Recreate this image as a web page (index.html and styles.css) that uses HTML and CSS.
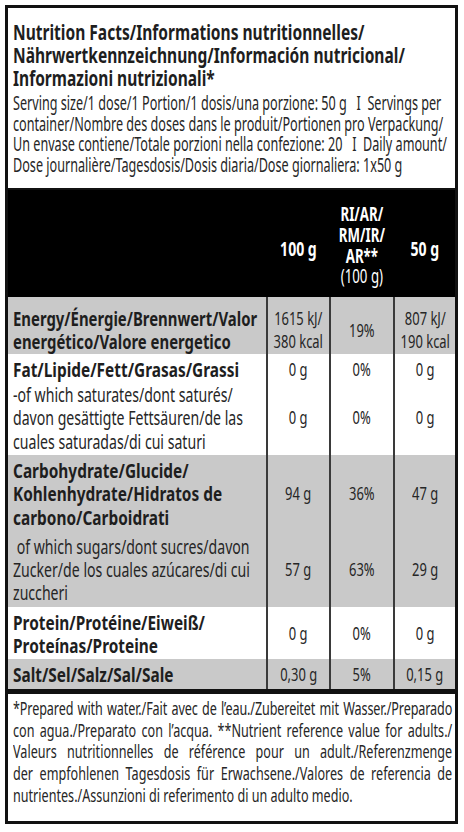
FILE: index.html
```html
<!DOCTYPE html>
<html lang="en">
<head>
<meta charset="utf-8">
<title>Nutrition Facts</title>
<link rel="stylesheet" href="styles.css">
</head>
<body>
<div class="label">
  <div class="head">
    <h1 class="title">Nutrition Facts/Informations nutritionnelles/<br>Nährwertkennzeichnung/Información nutricional/<br>Informazioni nutrizionali*</h1>
    <p class="serving">Serving size/1 dose/1 Portion/1 dosis/una porzione: 50 g&nbsp;&nbsp;&nbsp;I&nbsp;&nbsp;Servings per<br>container/Nombre des doses dans le produit/Portionen pro Verpackung/<br>Un envase contiene/Totale porzioni nella confezione: 20&nbsp;&nbsp;&nbsp;I&nbsp;&nbsp;Daily amount/<br>Dose journalière/Tagesdosis/Dosis diaria/Dose giornaliera: 1x50 g</p>
  </div>
  <table class="facts">
    <colgroup>
      <col class="c-name">
      <col class="c-100">
      <col class="c-ri">
      <col class="c-50">
    </colgroup>
    <thead>
      <tr>
        <th></th>
        <th class="h-col"><span class="v">100 g</span></th>
        <th class="h-ri"><span class="v">RI/AR/<br>RM/IR/<br>AR**<br><span class="sub">(100 g)</span></span></th>
        <th class="h-col"><span class="v">50 g</span></th>
      </tr>
    </thead>
    <tbody>
      <tr class="gray r-energy">
        <td class="name"><span class="t">Energy/Énergie/Brennwert/Valor<br>energético/Valore energetico</span></td>
        <td class="num"><span class="v">1615 kJ/<br>380 kcal</span></td>
        <td class="num"><span class="v">19%</span></td>
        <td class="num"><span class="v">807 kJ/<br>190 kcal</span></td>
      </tr>
      <tr class="r-fat">
        <td class="name"><span class="t">Fat/Lipide/Fett/Grasas/Grassi</span></td>
        <td class="num"><span class="v">0 g</span></td>
        <td class="num"><span class="v">0%</span></td>
        <td class="num"><span class="v">0 g</span></td>
      </tr>
      <tr class="r-sat">
        <td class="name sub-row"><span class="t">-of which saturates/dont saturés/<br>davon gesättigte Fettsäuren/de las<br>cuales saturadas/di cui saturi</span></td>
        <td class="num"><span class="v">0 g</span></td>
        <td class="num"><span class="v">0%</span></td>
        <td class="num"><span class="v">0 g</span></td>
      </tr>
      <tr class="gray">
        <td class="name"><span class="t">Carbohydrate/Glucide/<br>Kohlenhydrate/Hidratos de<br>carbono/Carboidrati</span></td>
        <td class="num"><span class="v">94 g</span></td>
        <td class="num"><span class="v">36%</span></td>
        <td class="num"><span class="v">47 g</span></td>
      </tr>
      <tr class="gray">
        <td class="name sub-row"><span class="t">&nbsp;of which sugars/dont sucres/davon<br>Zucker/de los cuales azúcares/di cui<br>zuccheri</span></td>
        <td class="num"><span class="v">57 g</span></td>
        <td class="num"><span class="v">63%</span></td>
        <td class="num"><span class="v">29 g</span></td>
      </tr>
      <tr>
        <td class="name"><span class="t">Protein/Protéine/Eiweiß/<br>Proteínas/Proteine</span></td>
        <td class="num"><span class="v">0 g</span></td>
        <td class="num"><span class="v">0%</span></td>
        <td class="num"><span class="v">0 g</span></td>
      </tr>
      <tr class="gray last">
        <td class="name"><span class="t">Salt/Sel/Salz/Sal/Sale</span></td>
        <td class="num"><span class="v">0,30 g</span></td>
        <td class="num"><span class="v">5%</span></td>
        <td class="num"><span class="v">0,15 g</span></td>
      </tr>
    </tbody>
  </table>
  <div class="note">
    <div class="note-text">
      <span class="ln tight">*Prepared with water./Fait avec de l’eau./Zubereitet mit Wasser./Preparado</span>
      <span class="ln">con agua./Preparato con l’acqua. **Nutrient reference value for adults./</span>
      <span class="ln">Valeurs nutritionnelles de référence pour un adult./Referenzmenge</span>
      <span class="ln">der empfohlenen Tagesdosis für Erwachsene./Valores de referencia de</span>
      <span class="ln end">nutrientes./Assunzioni di referimento di un adulto medio.</span>
    </div>
  </div>
</div>
</body>
</html>
```

FILE: styles.css
```css
html, body {
  margin: 0;
  padding: 0;
  background: #ffffff;
}

body {
  font-family: "Noto Sans", "Open Sans", "DejaVu Sans", sans-serif;
  color: #1e1e1e;
}

.label {
  margin: 5px 0 0 5px;
  width: 453px;
  box-sizing: border-box;
  border: 3px solid #111111;
  overflow: hidden;
}

/* ---------- heading block ---------- */
.head {
  padding: 13px 5px 12.5px;
  border-bottom: 2px solid #111111;
}

.title {
  margin: 0;
  width: max-content;
  white-space: nowrap;
  font-size: 21px;
  line-height: 22.75px;
  font-weight: 700;
  transform: scaleX(0.74);
  transform-origin: left top;
}

.serving {
  margin: 4px 0 0;
  width: max-content;
  white-space: nowrap;
  font-size: 19px;
  line-height: 20.6px;
  font-weight: 400;
  color: #262626;
  transform: scaleX(0.664);
  transform-origin: left top;
}

/* ---------- table ---------- */
.facts {
  width: 100%;
  border-collapse: collapse;
  table-layout: fixed;
}

.c-name { width: 259px; }
.c-100 { width: 63px; }
.c-ri { width: 64px; }
.c-50 { width: 61px; }

.facts thead tr {
  height: 107px;
}

.facts th {
  background: #000000;
  color: #ffffff;
  padding: 0;
  font-size: 19.5px;
  line-height: 20.6px;
  font-weight: 700;
  text-align: center;
  vertical-align: middle;
  white-space: nowrap;
}

.facts th.h-col {
  padding-top: 12px;
}

.facts th.h-col .v {
  transform: scaleX(0.72);
}

.facts th.h-ri {
  padding-top: 4px;
}

.facts th .sub {
  font-weight: 400;
}

.v {
  display: inline-block;
  margin: 0 -30px;
  white-space: nowrap;
  transform: scaleX(0.68);
}

.facts td {
  padding: 4px 5px 2px;
  font-size: 20px;
  line-height: 23.3px;
  vertical-align: middle;
}

.facts td.name .t {
  display: inline-block;
  white-space: nowrap;
  font-weight: 700;
  transform: scaleX(0.77);
  transform-origin: left center;
}

.facts tr.r-energy td.name .t {
  transform: scaleX(0.745);
}

.facts td.sub-row .t {
  font-weight: 400;
  color: #262626;
  transform: scaleX(0.705);
}

.facts td.num {
  padding-left: 0;
  padding-right: 0;
  text-align: center;
  font-size: 18px;
  color: #262626;
  border-left: 2px solid #3a3a3a;
}

.facts td.num .v {
  transform: scaleX(0.72);
}

.facts tr.r-energy td {
  padding-top: 10px;
  padding-bottom: 0;
}

.facts tr.r-fat td {
  padding-top: 4px;
  padding-bottom: 0;
}

.facts tr.r-sat td {
  padding-top: 2px;
  padding-bottom: 2px;
}

.facts tr.gray td {
  background: #c9c9c9;
}

.facts tr.last td {
  border-bottom: 5px solid #111111;
}

/* ---------- footnote ---------- */
.note {
  padding: 4.7px 5px 14.6px;
}

.note-text {
  width: 610px;
  font-size: 17.5px;
  line-height: 21.6px;
  color: #262626;
  transform: scaleX(0.72);
  transform-origin: left top;
}

.ln {
  display: block;
  white-space: nowrap;
  text-align: justify;
  text-align-last: justify;
}

.ln.tight {
  letter-spacing: -0.15px;
}

.ln.end {
  text-align: left;
  text-align-last: left;
}
```
